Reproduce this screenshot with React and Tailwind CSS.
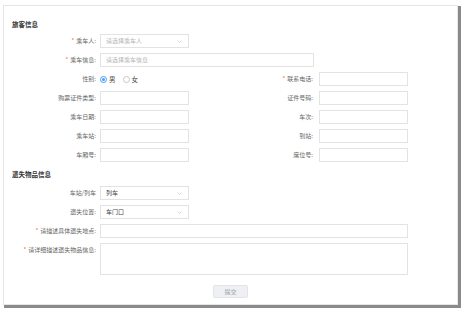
import React from 'react';

const font = { fontFamily: '"Noto Sans CJK SC", "Noto Sans", sans-serif' };

const Label = ({ children, required, className = '' }) => (
    <div className={`text-right text-[6px] text-[#666] leading-[14px] whitespace-nowrap ${className}`}>
        {required && <span className="text-[#f56c6c] mr-[2px]">*</span>}
        {children}:
    </div>
);

const Input = ({ className = 'w-[89px]', placeholder = '' }) => (
    <div className={`h-[14px] border border-[#e3e3e3] bg-white px-[5px] text-[6px] leading-[12px] text-[#b5b5b5] ${className}`}>
        {placeholder}
    </div>
);

const Select = ({ value, placeholder }) => (
    <div className="h-[14px] w-[89px] border border-[#e3e3e3] bg-white px-[5px] flex items-center justify-between">
        <span className={`text-[6px] leading-[12px] ${value ? 'text-[#444]' : 'text-[#b5b5b5]'}`}>{value || placeholder}</span>
        <svg width="5" height="3" viewBox="0 0 5 3" className="mr-[1px]">
            <path d="M0.5 0.5 L2.5 2.5 L4.5 0.5" fill="none" stroke="#c8c8c8" strokeWidth="0.7" />
        </svg>
    </div>
);

const Row = ({ left, right }) => (
    <div className="flex items-center h-[14px]">
        <div className="w-[84px] mr-[4px]">{left[0]}</div>
        {left[1]}
        {right && (
            <>
                <div className="flex-1 mr-[6px]">{right[0]}</div>
                {right[1]}
            </>
        )}
    </div>
);

const Radio = ({ checked, label }) => (
    <div className="flex items-center mr-[7px]">
        <div className={`w-[7px] h-[7px] rounded-full border flex items-center justify-center ${checked ? 'border-[#409eff]' : 'border-[#c8c8c8]'}`}>
            {checked && <div className="w-[3px] h-[3px] rounded-full bg-[#409eff]" />}
        </div>
        <span className="ml-[2px] text-[6.5px] text-[#444] leading-[14px]">{label}</span>
    </div>
);

const App = () => {
    return (
        <div className="w-[465px] h-[310px] bg-white" style={font}>
            <div className="relative left-[3px] top-[5px] w-[455px] h-[300px] bg-white border border-[#e6e6e6] shadow-[2px_2px_0_1px_#8a8a8a] pl-[8px] pr-[49px] pt-[14px]">
                <div className="text-[6.5px] font-bold text-[#333] leading-[8px]">旅客信息</div>

                <div className="mt-[6px] flex flex-col gap-[5px]">
                    <Row left={[<Label required>乘车人</Label>, <Select placeholder="请选择乘车人" />]} />
                    <Row left={[<Label required>乘车信息</Label>, <Input className="w-[214px]" placeholder="请选择乘车信息" />]} />
                    <Row
                        left={[
                            <Label>性别</Label>,
                            <div className="w-[89px] flex items-center">
                                <Radio checked label="男" />
                                <Radio label="女" />
                            </div>,
                        ]}
                        right={[<Label required>联系电话</Label>, <Input />]}
                    />
                    <Row left={[<Label>购票证件类型</Label>, <Input />]} right={[<Label>证件号码</Label>, <Input />]} />
                    <Row left={[<Label>乘车日期</Label>, <Input />]} right={[<Label>车次</Label>, <Input />]} />
                    <Row left={[<Label>乘车站</Label>, <Input />]} right={[<Label>到站</Label>, <Input />]} />
                    <Row left={[<Label>车厢号</Label>, <Input />]} right={[<Label>席位号</Label>, <Input />]} />
                </div>

                <div className="mt-[8px] text-[6.5px] font-bold text-[#333] leading-[8px]">遗失物品信息</div>

                <div className="mt-[8px] flex flex-col gap-[5px]">
                    <div className="flex items-center h-[14px]">
                        <div className="w-[84px] mr-[4px] text-right text-[6px] text-[#666] leading-[14px]">车站/列车</div>
                        <Select value="列车" />
                    </div>
                    <Row left={[<Label>遗失位置</Label>, <Select value="车门口" />]} />
                    <Row left={[<Label required>请描述具体遗失地点</Label>, <Input className="flex-1" />]} />
                    <div className="flex items-start">
                        <div className="w-[84px] mr-[4px]">
                            <Label required>请详细描述遗失物品信息</Label>
                        </div>
                        <div className="flex-1 h-[32px] border border-[#e3e3e3] bg-white" />
                    </div>
                </div>

                <div className="mt-[10px] flex justify-center">
                    <button className="ml-[41px] w-[35px] h-[13px] bg-[#eef0f3] border border-[#e2e4e8] rounded-[2px] text-[6px] text-[#9aa0a8] leading-[11px]">
                        提交
                    </button>
                </div>
            </div>
        </div>
    );
};

export default App;
